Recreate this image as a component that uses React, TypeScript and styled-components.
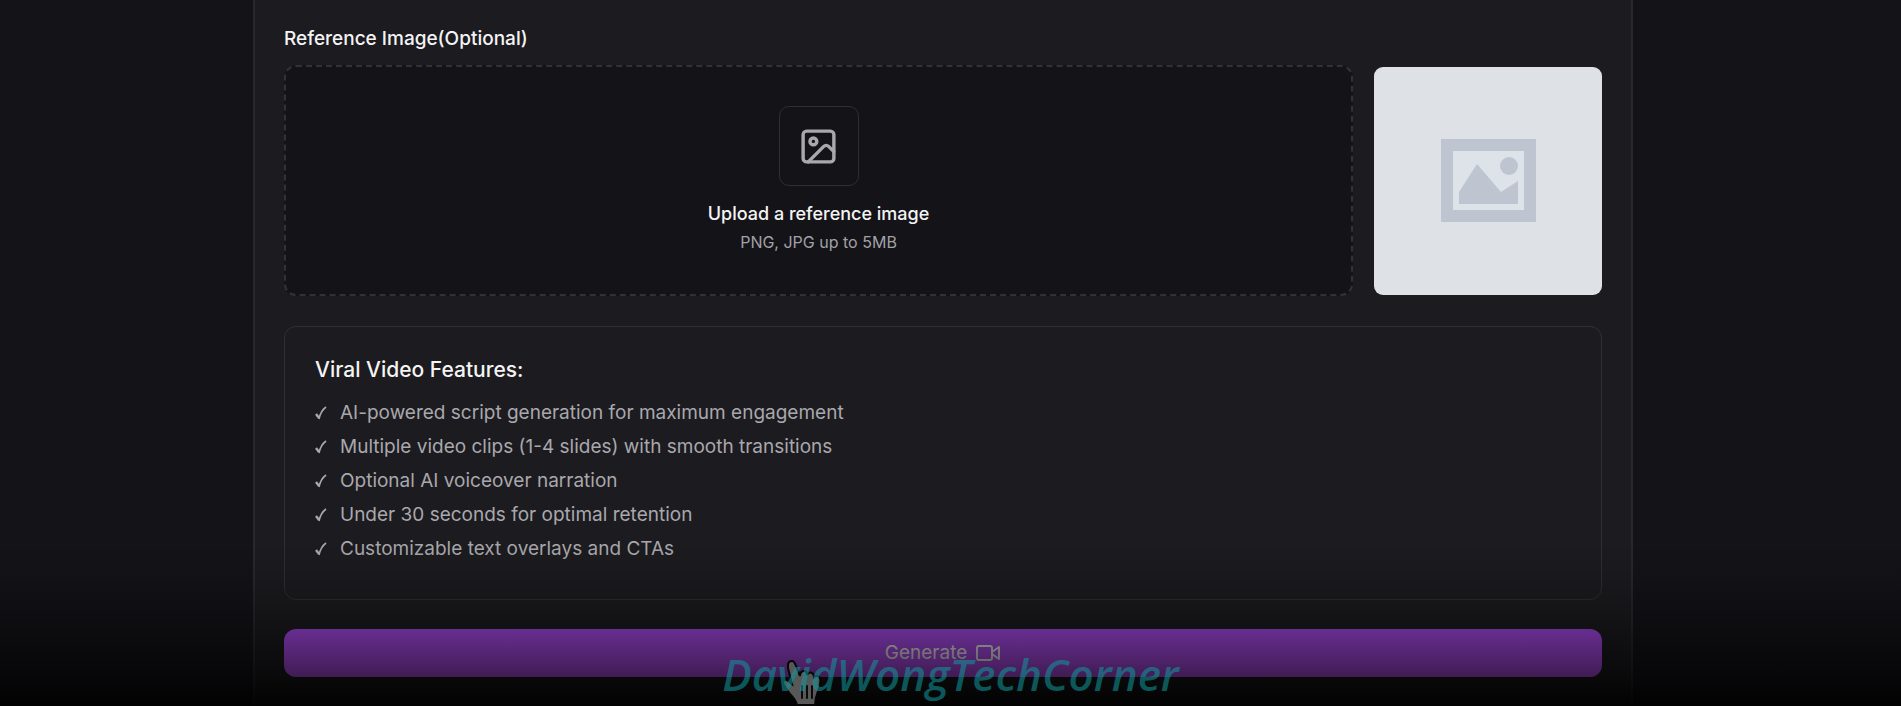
import React from "react";
import styled, { createGlobalStyle } from "styled-components";
import { Image as ImageIcon } from "lucide-react";

const Global = createGlobalStyle`
  *, *::before, *::after { box-sizing: border-box; }
  body {
    margin: 0;
    background: #141318;
    color: #f4f4f5;
    font-family: Inter, "Liberation Sans", sans-serif;
    overflow: hidden;
  }
`;

const Page = styled.div`
  position: relative;
  min-height: 100vh;
  padding-right: 15px;
  display: flex;
  justify-content: center;
`;

const Panel = styled.form`
  flex: 1;
  min-width: 0;
  max-width: 1380px;
  padding: 25px 29px 28px;
  background: #1c1b1f;
  border: solid #29282d;
  border-width: 0 2px;
`;

const FieldLabel = styled.label`
  display: block;
  font-size: 19px;
  line-height: 28px;
  font-weight: 500;
`;

const UploadRow = styled.div`
  display: flex;
  align-items: center;
  gap: 21px;
  margin-top: 12px;
`;

const DropZone = styled.label`
  flex: 1;
  height: 231px;
  padding-top: 1px;
  display: flex;
  flex-direction: column;
  align-items: center;
  justify-content: center;
  background: #141318;
  border: 2px dashed #323136;
  border-radius: 12px;
  cursor: pointer;
`;

const HiddenFile = styled.input`
  position: absolute;
  width: 1px;
  height: 1px;
  opacity: 0;
`;

const IconTile = styled.span`
  width: 80px;
  height: 80px;
  display: grid;
  place-items: center;
  border: 1px solid #2f2e33;
  border-radius: 10px;
  color: #a9a8ad;
`;

const UploadTitle = styled.span`
  margin-top: 14px;
  font-size: 18px;
  line-height: 28px;
  font-weight: 500;
`;

const UploadHint = styled.span`
  font-size: 16px;
  line-height: 28px;
  color: #a1a1a6;
`;

const Preview = styled.div`
  width: 228px;
  height: 228px;
  display: grid;
  place-items: center;
  background: #dee2e6;
  border-radius: 9px;
`;

const Features = styled.section`
  margin-top: 30px;
  height: 274px;
  padding: 29px 30px;
  border: 1px solid #302f34;
  border-radius: 12px;
`;

const FeaturesTitle = styled.h2`
  margin: 0;
  font-size: 21px;
  line-height: 28px;
  font-weight: 500;
`;

const FeatureList = styled.ul`
  margin: 12px 0 0;
  padding: 0;
  list-style: none;
`;

const Feature = styled.li`
  display: flex;
  gap: 13px;
  font-size: 19px;
  line-height: 34px;
  color: #a9a8ad;
`;

const Check = styled.svg`
  width: 12px;
  height: 34px;
`;

const GenerateButton = styled.button`
  width: 100%;
  height: 48px;
  margin-top: 29px;
  display: flex;
  align-items: center;
  justify-content: center;
  gap: 8px;
  border: 0;
  border-radius: 12px;
  background: linear-gradient(#a548e8, #bd52f8);
  color: #f4f4f5;
  font: 400 19px/28px Inter, "Liberation Sans", sans-serif;
  cursor: pointer;
`;

const Fade = styled.div`
  position: absolute;
  inset: auto 0 0;
  height: 166px;
  background: linear-gradient(
    to bottom,
    rgba(0, 0, 0, 0),
    rgba(0, 0, 0, 0.1) 22%,
    rgba(0, 0, 0, 0.38) 54%,
    rgba(0, 0, 0, 0.67) 83%,
    rgba(0, 0, 0, 0.92)
  );
  pointer-events: none;
`;

const Watermark = styled.div`
  position: absolute;
  inset: auto 0 4px;
  text-align: center;
  font: italic 600 44px/56px "Open Sans", "Noto Sans", sans-serif;
  color: rgba(16, 150, 155, 0.56);
  pointer-events: none;
`;

const Pointer = styled.svg`
  position: absolute;
  left: 41%;
  bottom: 0;
  width: 44px;
  height: 46px;
  pointer-events: none;
`;

const features = [
  "AI-powered script generation for maximum engagement",
  "Multiple video clips (1-4 slides) with smooth transitions",
  "Optional AI voiceover narration",
  "Under 30 seconds for optimal retention",
  "Customizable text overlays and CTAs",
];

export default function App() {
  return (
    <>
      <Global />
      <Page>
        <Panel onSubmit={(e) => e.preventDefault()}>
          <FieldLabel htmlFor="reference">Reference Image(Optional)</FieldLabel>
          <UploadRow>
            <DropZone>
              <HiddenFile id="reference" type="file" accept="image/png,image/jpeg" />
              <IconTile>
                <ImageIcon size={41} />
              </IconTile>
              <UploadTitle>Upload a reference image</UploadTitle>
              <UploadHint>PNG, JPG up to 5MB</UploadHint>
            </DropZone>
            <Preview>
              <svg width="95" height="83" viewBox="0 0 95 83" fill="#bfc5d0" aria-hidden="true">
                <path fillRule="evenodd" d="M0 0H95V83H0ZM12 12V71H83V12Z" />
                <path d="M12 12H83V71H12Z" fill="#dee3ea" />
                <path d="M18 53 36 25 60 53 77 42V65H18Z" />
                <circle cx="68" cy="27" r="9" />
              </svg>
            </Preview>
          </UploadRow>
          <Features>
            <FeaturesTitle>Viral Video Features:</FeaturesTitle>
            <FeatureList>
              {features.map((text) => (
                <Feature key={text}>
                  <Check viewBox="0 0 12 34" fill="none" stroke="currentColor" aria-hidden="true">
                    <path d="M1 18 4 22" strokeWidth="2.4" />
                    <path d="M4 23C5 18 7 14 11 11" strokeWidth="1.6" />
                  </Check>
                  {text}
                </Feature>
              ))}
            </FeatureList>
          </Features>
          <GenerateButton type="submit">
            Generate
            <svg width="26" height="20" viewBox="0 0 26 20" fill="none" stroke="currentColor" strokeWidth="1.9" strokeLinejoin="round" aria-hidden="true">
              <rect x="2" y="3" width="15" height="14" rx="2" />
              <path d="M17 9 24 4V16L17 11Z" />
            </svg>
          </GenerateButton>
        </Panel>
        <Fade />
        <Pointer viewBox="-3 0 44 46" aria-hidden="true">
          <path
            d="M6 5C6 2 8 1 10 1S13 3 14 6L18 16C18 12 20 11 22 11S25 13 25 15C26 13 28 12 30 13S32 15 32 17C34 15 37 16 38 18S38 27 36 31C34 36 33 39 33 45H15C14 40 11 37 8 34L2 25C0 22 2 19 5 20L10 24 6 8Z"
            fill="#585858"
            stroke="#050505"
            strokeWidth="2"
          />
          <path d="M20 26V38M25 26V38M30 26V38" stroke="#0a0a0a" strokeWidth="2" strokeLinecap="round" />
        </Pointer>
        <Watermark>DavidWongTechCorner</Watermark>
      </Page>
    </>
  );
}
